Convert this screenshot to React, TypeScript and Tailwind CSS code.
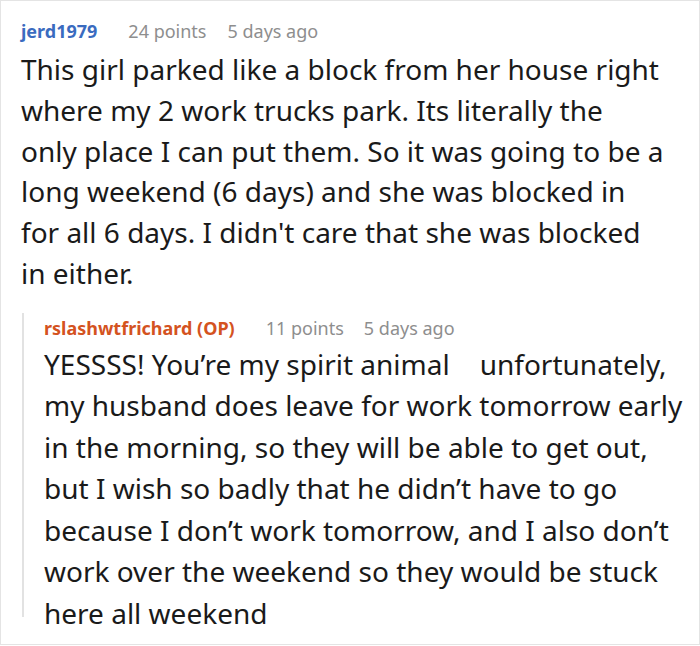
export default function App() {
  const body = "font-['Noto_Sans',sans-serif] text-[28px] text-[#1a1a1a]";
  return (
    <div className="w-[700px] h-[646px] bg-white">
      <div className="w-[700px] h-[645px] border border-[#e4e4e4] pl-[20px] pt-[15px] font-['Noto_Sans',sans-serif]">
        {/* Comment header */}
        <div className="flex items-baseline text-[18px] leading-[30px]">
          <span className="font-bold text-[#3a6bbf] mr-[31px]">jerd1979</span>
          <span className="text-[#8e8e8e] mr-[21px]">24 points</span>
          <span className="text-[#8e8e8e]">5 days ago</span>
        </div>
        <p className={`${body} leading-[40.8px] mt-[3px] whitespace-nowrap`}>
          This girl parked like a block from her house right
          <br />
          where my 2 work trucks park. Its literally the
          <br />
          only place I can put them. So it was going to be a
          <br />
          long weekend (6 days) and she was blocked in
          <br />
          for all 6 days. I didn't care that she was blocked
          <br />
          in either.
        </p>

        {/* Reply */}
        <div className="mt-[29px] ml-[1px] border-l-2 border-[#e2e2e2] pl-[20px] h-[304px]">
          <div className="flex items-baseline text-[18px] leading-[30px] -mt-[10px]">
            <span className="font-bold text-[#d4531f] mr-[31px]">rslashwtfrichard (OP)</span>
            <span className="text-[#8e8e8e] mr-[20px]">11 points</span>
            <span className="text-[#8e8e8e]">5 days ago</span>
          </div>
          <p className={`${body} leading-[41.5px] mt-[1px] whitespace-nowrap`}>
            YESSSS! You’re my spirit animal
            <span className="inline-block w-[30px]" />
            unfortunately,
            <br />
            my husband does leave for work tomorrow early
            <br />
            in the morning, so they will be able to get out,
            <br />
            but I wish so badly that he didn’t have to go
            <br />
            because I don’t work tomorrow, and I also don’t
            <br />
            work over the weekend so they would be stuck
            <br />
            here all weekend
          </p>
        </div>
      </div>
    </div>
  );
}
